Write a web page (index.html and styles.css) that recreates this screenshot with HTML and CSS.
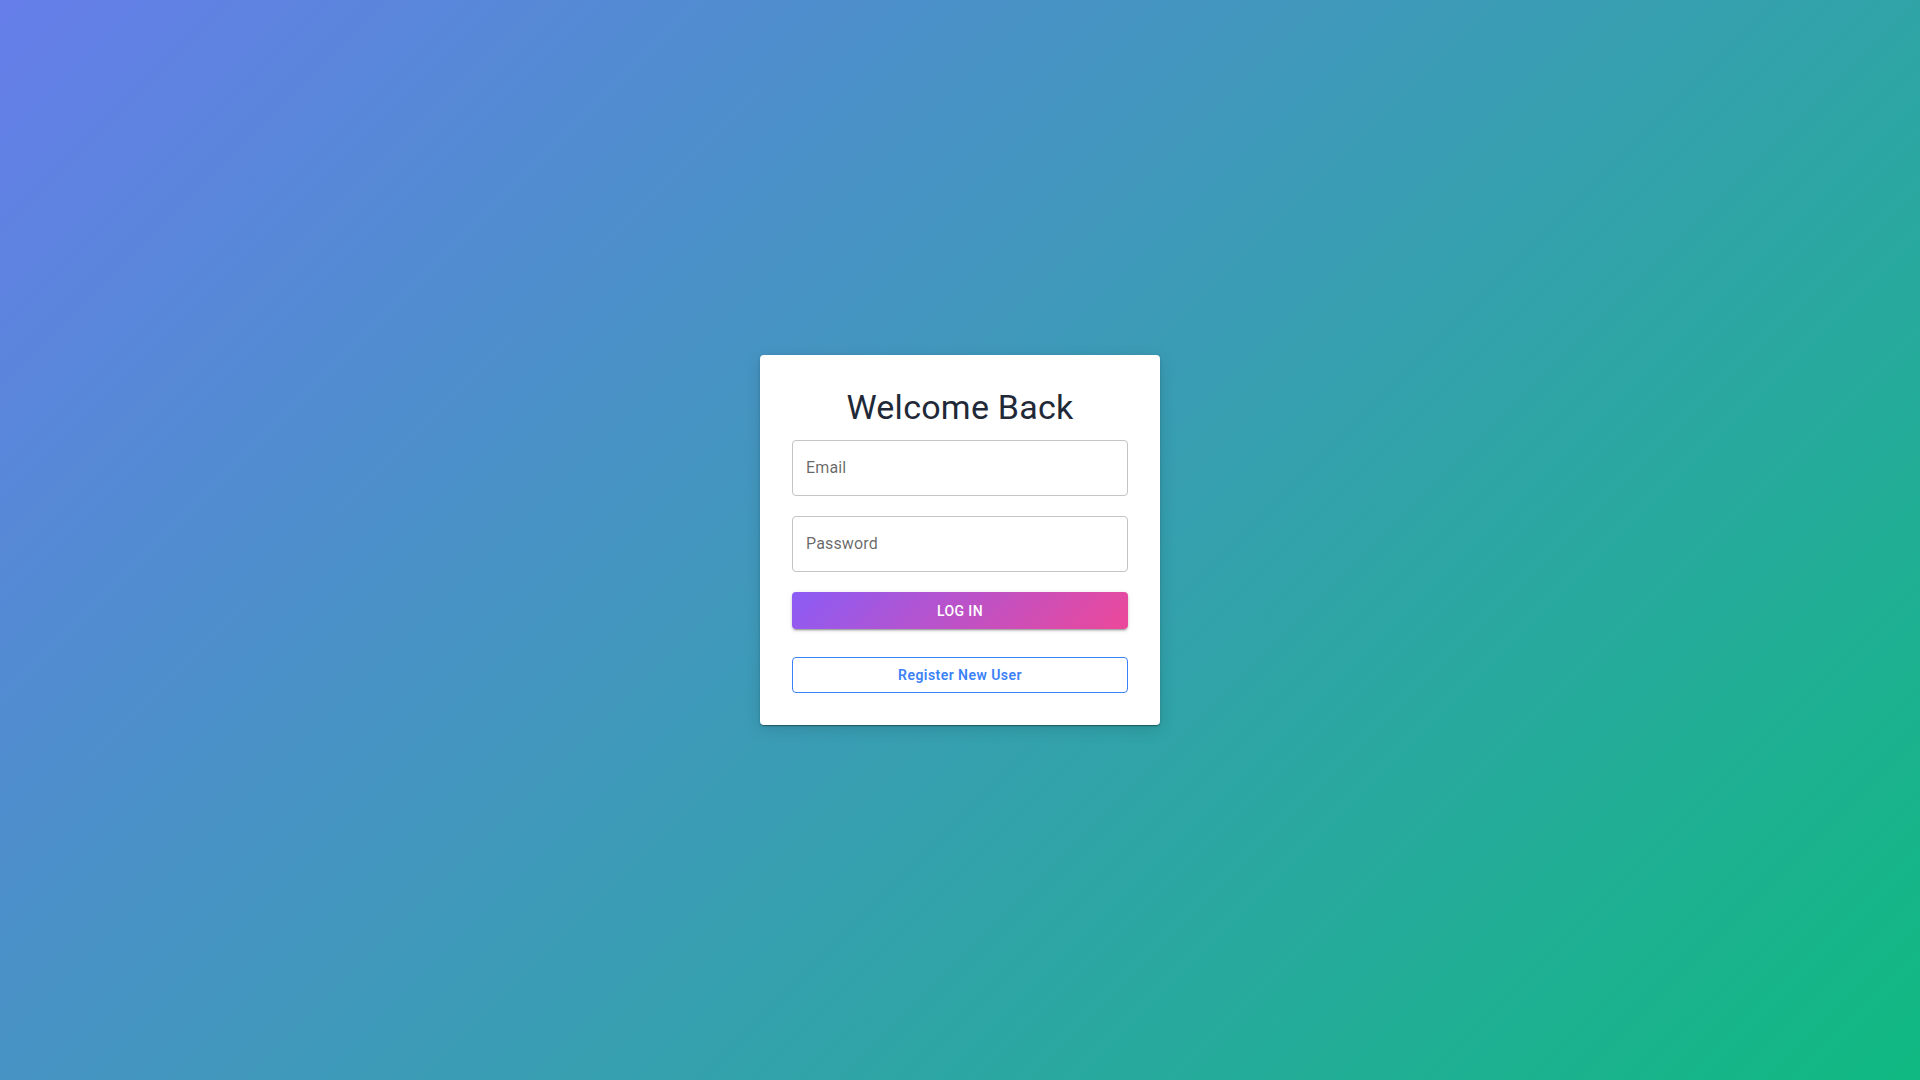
FILE: index.html
```html
<!DOCTYPE html>
<html lang="en">
<head>
<meta charset="utf-8">
<title>Welcome Back</title>
<link rel="stylesheet" href="styles.css">
</head>
<body>
<main class="page">
  <form class="card">
    <h1 class="title">Welcome Back</h1>
    <input class="field" type="email" placeholder="Email">
    <input class="field field-second" type="password" placeholder="Password">
    <button class="btn-login" type="button">Log In</button>
    <button class="btn-register" type="button">Register New User</button>
  </form>
</main>
</body>
</html>
```
FILE: styles.css
```css
* { box-sizing: border-box; }
html, body { margin: 0; padding: 0; height: 100%; }
body {
  font-family: Roboto, "Liberation Sans", Arial, sans-serif;
  background: linear-gradient(135deg, #667eea 0%, #10b981 100%);
  min-height: 100vh;
}
.page {
  height: 100vh;
  display: flex;
  align-items: center;
  justify-content: center;
}
.card {
  width: 400px;
  background: #fff;
  border-radius: 4px;
  padding: 32px;
  display: flex;
  flex-direction: column;
  box-shadow: 0 2px 1px -1px rgba(0,0,0,0.2), 0 1px 1px 0 rgba(0,0,0,0.14), 0 1px 3px 0 rgba(0,0,0,0.12), 0 4px 16px rgba(0,0,0,0.12);
}
.title {
  margin: 0 0 13px;
  font-size: 34px;
  font-weight: 400;
  line-height: 40px;
  letter-spacing: 0.25px;
  text-align: center;
  color: #1f2937;
}
.field {
  height: 56px;
  width: 100%;
  border: 1px solid #c4c4c4;
  border-radius: 4px;
  padding: 0 13px 2px;
  font-family: inherit;
  font-size: 16px;
  letter-spacing: 0.15px;
  color: #222;
  outline: none;
  background: #fff;
}
.field::placeholder { color: rgba(0,0,0,0.6); }
.field-second { margin-top: 20px; }
.btn-login {
  margin-top: 20px;
  height: 37px;
  border: none;
  border-radius: 4px;
  background: linear-gradient(135deg, #8b5cf6 0%, #ec4899 100%);
  color: #fff;
  font-family: inherit;
  font-size: 14px;
  font-weight: 500;
  letter-spacing: 0.4px;
  text-transform: uppercase;
  box-shadow: 0 3px 1px -2px rgba(0,0,0,0.2), 0 2px 2px 0 rgba(0,0,0,0.14), 0 1px 5px 0 rgba(0,0,0,0.12);
  cursor: pointer;
}
.btn-register {
  margin-top: 28px;
  height: 36px;
  border: 1px solid #3b82f6;
  border-radius: 4px;
  background: #fff;
  color: #3b82f6;
  font-family: inherit;
  font-size: 14px;
  font-weight: 600;
  letter-spacing: 0.45px;
  cursor: pointer;
}
```
